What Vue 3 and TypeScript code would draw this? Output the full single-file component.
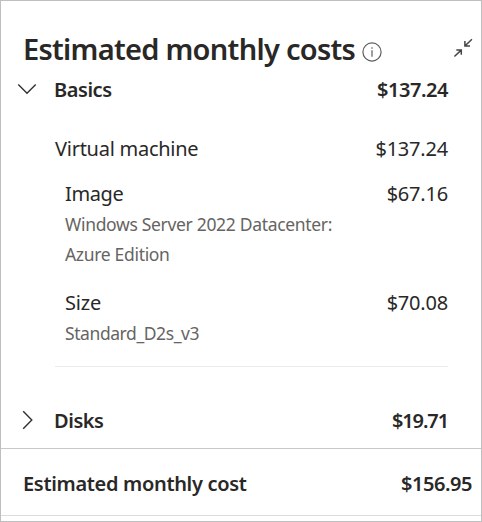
<script setup lang="ts">
interface LineItem {
  id: string
  name: string
  price: string
  details: string[]
}

const items: LineItem[] = [
  {
    id: 'image',
    name: 'Image',
    price: '$67.16',
    details: ['Windows Server 2022 Datacenter:', 'Azure Edition'],
  },
  { id: 'size', name: 'Size', price: '$70.08', details: ['Standard_D2s_v3'] },
]
</script>

<template>
  <section class="panel">
    <header class="header">
      <h1 class="title"><span>Estimated monthly costs</span></h1>
      <svg class="info" width="20" height="20" viewBox="0 0 20 20">
        <circle cx="10" cy="10" r="9.1" />
        <path d="M10 8.2V14.8M10 5.2V6.8" />
      </svg>
      <svg class="collapse" width="20" height="20" viewBox="0 0 20 20">
        <path d="M18.9 1.3L11.9 8M11.9 3V8.1H17M1.4 18.5L8.2 12.1M3.3 11.9H8.3V16.8" />
      </svg>
    </header>

    <div class="row group">
      <svg class="chevron" width="20" height="20" viewBox="0 0 20 20">
        <path d="M1.3 5.6L10 14.2L18.7 5.6" />
      </svg>
      <span class="strong basics">Basics</span>
      <span class="strong price">$137.24</span>
    </div>

    <div class="body">
      <div class="row vm">
        <span class="vm-name">Virtual machine</span>
        <span class="price">$137.24</span>
      </div>
      <div v-for="item in items" :key="item.id" class="item" :class="item.id">
        <div class="row">
          <span class="name">{{ item.name }}</span>
          <span class="price">{{ item.price }}</span>
        </div>
        <div v-for="detail in item.details" :key="detail" class="detail">
          <span>{{ detail }}</span>
        </div>
      </div>
    </div>

    <div class="row group disks-row">
      <svg class="chevron" width="20" height="20" viewBox="0 0 20 20">
        <path d="M6.2 1.2L14.8 10L6.2 18.8" />
      </svg>
      <span class="strong disks">Disks</span>
      <span class="strong price">$19.71</span>
    </div>

    <footer class="row total">
      <span class="strong total-name">Estimated monthly cost</span>
      <span class="strong price">$156.95</span>
    </footer>
  </section>
</template>

<style>
body {
  background: #fff;
}
</style>

<style scoped>
.panel {
  box-sizing: border-box;
  width: 482px;
  height: 522px;
  padding-top: 28px;
  border: 1px solid #bfbfbf;
  background: #fff;
  color: #292827;
  font-family: 'Segoe UI', 'Noto Sans', sans-serif;
  font-size: 20px;
  line-height: 30px;
  white-space: nowrap;
  overflow: hidden;
}
svg {
  fill: none;
  stroke: #323130;
  flex: none;
}
.header {
  display: flex;
  height: 45px;
  padding: 0 8px 0 22px;
}
.title {
  margin: 0;
  width: 332px;
  font-size: 29px;
  line-height: 40px;
  font-weight: 600;
  letter-spacing: -0.72px;
}
.info {
  margin: 13px 0 0 7px;
  stroke: #605e5c;
  stroke-width: 1.2;
}
.collapse {
  margin: 9px 0 0 auto;
  stroke: #484644;
  stroke-width: 1.5;
}
.row {
  display: flex;
  height: 30px;
  line-height: 32px;
  letter-spacing: -0.2px;
}
.strong {
  font-weight: 600;
  letter-spacing: -0.45px;
}
.price {
  margin-left: auto;
}
.group {
  padding: 0 33px 0 16px;
}
.chevron {
  margin: 5px 17px 0 0;
  stroke-width: 1.4;
}
.body {
  box-sizing: border-box;
  height: 234px;
  margin: 29px 33px 0 54px;
  border-bottom: 1px solid #edebe9;
}
.vm {
  margin-bottom: 15px;
}
.vm-name {
  letter-spacing: -0.26px;
}
.item {
  padding-left: 10px;
}
.image {
  height: 109px;
}
.image .name {
  letter-spacing: -0.4px;
}
.detail {
  font-size: 17.5px;
  letter-spacing: -0.32px;
  color: #666462;
  height: 30px;
}
.size .detail {
  letter-spacing: -0.42px;
}
.item .row {
  height: 31px;
}
.disks-row {
  margin-top: 38px;
}
.disks-row .price {
  letter-spacing: -1.1px;
}
.total {
  box-sizing: border-box;
  height: 68px;
  margin-top: 13px;
  padding: 19px 9px 0 22px;
  border-top: 1px solid #c8c8c8;
  border-bottom: 1px solid #dcdcdc;
}
.total-name {
  letter-spacing: -0.32px;
}
</style>
